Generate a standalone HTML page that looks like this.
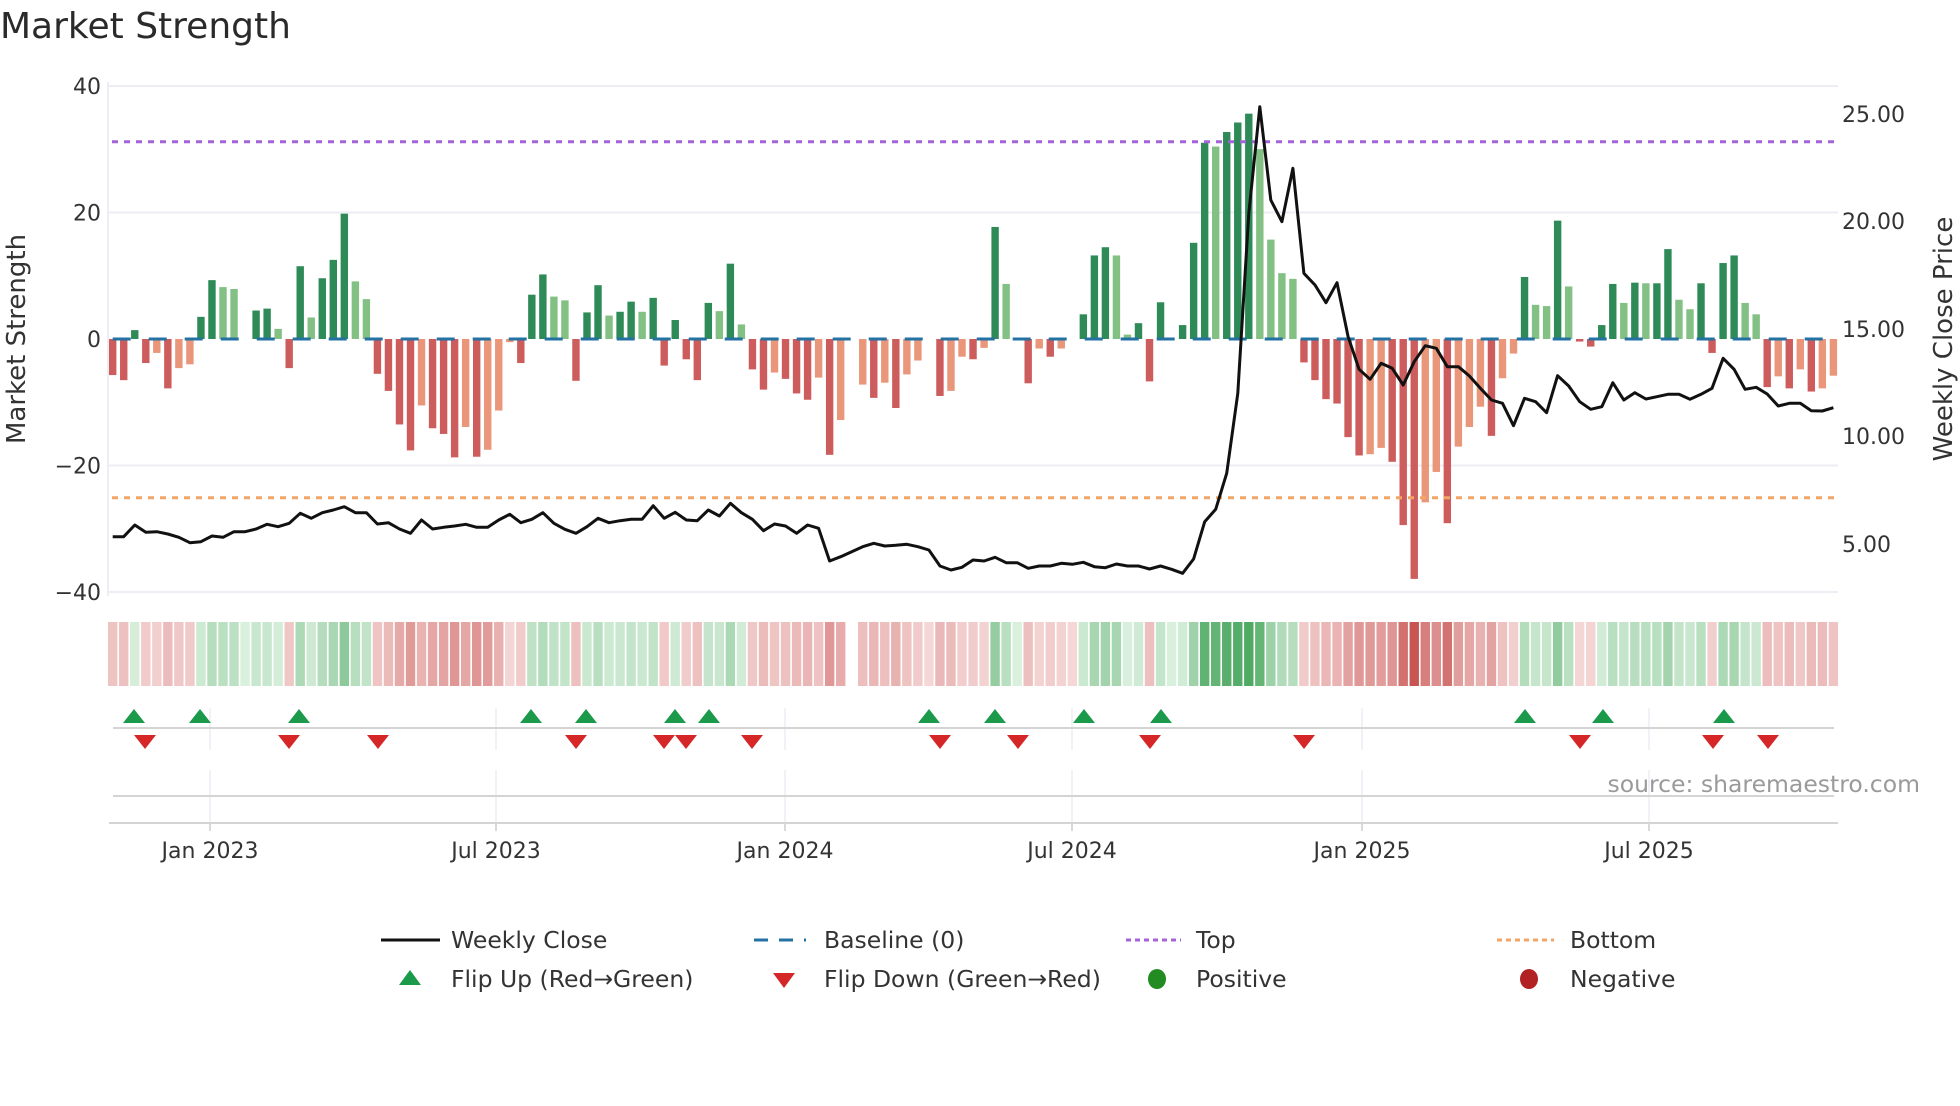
<!DOCTYPE html>
<html><head><meta charset="utf-8">
<style>
html,body{margin:0;padding:0;background:#fff;}
body{width:1960px;height:1102px;overflow:hidden;font-family:"DejaVu Sans","Liberation Sans",sans-serif;}
svg text{font-family:"DejaVu Sans","Liberation Sans",sans-serif;}
</style></head>
<body>
<svg id="c" width="1960" height="1102" xmlns="http://www.w3.org/2000/svg">
<text x="0" y="38" font-size="36" fill="#2a2a2a">Market Strength</text>
</svg>
<script>
const S=document.getElementById('c');
const NS='http://www.w3.org/2000/svg';
function el(t,a,txt){const e=document.createElementNS(NS,t);for(const k in a)e.setAttribute(k,a[k]);if(txt!==undefined)e.textContent=txt;S.appendChild(e);return e;}
const vals=[-5.7,-6.5,1.4,-3.8,-2.2,-7.8,-4.6,-4,3.5,9.3,8.2,7.9,0,4.5,4.8,1.6,-4.6,11.5,3.4,9.6,12.5,19.8,9.1,6.3,-5.5,-8.2,-13.5,-17.6,-10.5,-14.1,-15,-18.7,-13.9,-18.6,-17.5,-11.3,-0.5,-3.8,7,10.2,6.7,6.1,-6.6,4.2,8.5,3.7,4.3,5.9,4.3,6.5,-4.2,3,-3.2,-6.5,5.7,4.4,11.9,2.3,-4.8,-8,-5.3,-6.3,-8.6,-9.6,-6.1,-18.3,-12.8,0,-7.2,-9.3,-6.9,-10.9,-5.6,-3.4,0,-9,-8.2,-2.8,-3.2,-1.4,17.7,8.7,0,-7,-1.5,-2.8,-1.5,0,3.9,13.2,14.5,13.2,0.7,2.5,-6.7,5.8,0,2.2,15.2,31,30.4,32.7,34.2,35.6,30,15.7,10.4,9.5,-3.7,-6.5,-9.5,-10.2,-15.5,-18.4,-18.2,-17.2,-19.4,-29.4,-37.9,-25.8,-21,-29.1,-17,-13.9,-10.7,-15.3,-6.2,-2.3,9.8,5.4,5.2,18.7,8.3,-0.4,-1.2,2.2,8.7,5.7,8.9,8.8,8.8,14.2,6.2,4.7,8.8,-2.2,12,13.2,5.7,3.9,-7.6,-5.9,-7.8,-4.8,-8.3,-7.8,-5.8];
const types="RRDRSRSSDDLL-DDLRDLDDDLLRRRRSRRRSRSSSRDDLLRDDLDDLDRDRRDLDLRRSRRRSRS-SRSRSS-RSSRSDL-RSRS-DDDLLDRD-DDDLDDDLLLLRRRRRRSSRRRSSRSSSRSSDLLDLRRDDLDLDDLLDRDDLLRSRSRSS";
const price=[1370,1370,1335,1357,1355,1362,1372,1388,1385,1368,1372,1355,1355,1347,1333,1340,1330,1300,1315,1298,1290,1280,1298,1298,1332,1328,1347,1360,1320,1347,1342,1338,1333,1342,1342,1320,1303,1328,1318,1298,1330,
1348,1360,1340,1315,1328,1322,1318,1318,1277,1315,1297,1320,1322,1290,1308,1270,1298,1318,1352,1332,1338,1360,1335,1345,1443,1430,1415,1400,1390,1398,1396,1393,1400,1410,1458,1470,1462,1440,1443,1432,1448,1448,1465,
1458,1458,1450,1453,1447,1460,1463,1452,1458,1458,1467,1458,1468,1480,1437,1325,1288,1180,940,400,80,360,425,265,580,615,668,608,770,868,898,850,865,915,845,797,805,860,860,888,925,
960,970,1037,955,965,998,887,918,965,988,980,908,960,938,957,950,943,943,958,943,925,835,868,928,922,942,978,970,970,992,993,983];
const X0=112.7,DX=11.03,Z=339,K=6.33;
const col={D:'#2e8b57',L:'#82c083',R:'#cd5c5c',S:'#e9967a'};
[86,212.5,465.5,592].forEach(y=>el('line',{x1:109,x2:1838,y1:y,y2:y,stroke:'#eceef4','stroke-width':2}));
el('line',{x1:108,x2:108,y1:82,y2:596,stroke:'#eceef4','stroke-width':2});
[[40,86],[20,212.5],[0,339],['\u221220',465.5],['\u221240',592]].forEach(([t,y])=>el('text',{x:101,y:y+8,'font-size':22,'text-anchor':'end',fill:'#333'},String(t)));
[['25.00',114],['20.00',221],['15.00',329],['10.00',436],['5.00',544]].forEach(([t,y])=>el('text',{x:1842,y:y+8,'font-size':22,fill:'#333'},t));
el('text',{x:0,y:0,'font-size':26,fill:'#333','text-anchor':'middle',transform:'translate(25,339) rotate(-90)'},'Market Strength');
el('text',{x:0,y:0,'font-size':26,fill:'#333','text-anchor':'middle',transform:'translate(1952,339) rotate(-90)'},'Weekly Close Price');
vals.forEach((v,i)=>{const t=types[i];if(t==='-'||v===0)return;const x=X0+i*DX-3.7;const h=Math.abs(v)*K;el('rect',{x:x,y:v>0?Z-h:Z,width:7.4,height:h,fill:col[t]});});
el('line',{x1:112.7,x2:1838,y1:Z,y2:Z,stroke:'#2471a3','stroke-width':3,'stroke-dasharray':'18 18'});
el('line',{x1:112,x2:1838,y1:141.7,y2:141.7,stroke:'#a463d9','stroke-width':3,'stroke-dasharray':'6 6'});
el('line',{x1:112,x2:1838,y1:497.7,y2:497.7,stroke:'#f2a565','stroke-width':3,'stroke-dasharray':'6 6'});
el('polyline',{points:price.map((p,i)=>(X0+i*DX).toFixed(1)+','+(80+p/3).toFixed(1)).join(' '),fill:'none',stroke:'#111','stroke-width':3,'stroke-linejoin':'round'});
vals.forEach((v,i)=>{if(i===67)return;const a=Math.min(1,Math.abs(v)/38);let c;
 if(v>0||(v===0&&types[i-1]&&'DL'.includes(types[i-1]))){const r=Math.round(218-(218-70)*a),g=Math.round(240-(240-165)*a),b=Math.round(222-(222-92)*a);c=`rgb(${r},${g},${b})`;}
 else{const r=Math.round(245-(245-200)*a),g=Math.round(215-(215-85)*a),b=Math.round(215-(215-82)*a);c=`rgb(${r},${g},${b})`;}
 el('rect',{x:X0+i*DX-4.7,y:622,width:9.4,height:64,fill:c});});
const ticks=[['Jan 2023',210],['Jul 2023',496],['Jan 2024',785],['Jul 2024',1072],['Jan 2025',1362],['Jul 2025',1649]];
ticks.forEach(([t,x])=>{el('line',{x1:x,x2:x,y1:708,y2:750,stroke:'#eceef4','stroke-width':1.5});el('line',{x1:x,x2:x,y1:770,y2:823,stroke:'#eceef4','stroke-width':1.5});el('line',{x1:x,x2:x,y1:823,y2:831,stroke:'#ccc','stroke-width':1.5});el('text',{x:x,y:858,'font-size':22,'text-anchor':'middle',fill:'#333'},t);});
el('line',{x1:113,x2:1834,y1:728,y2:728,stroke:'#d4d4d4','stroke-width':2});
el('line',{x1:113,x2:1834,y1:796,y2:796,stroke:'#d4d4d4','stroke-width':2});
el('line',{x1:109,x2:1838,y1:823,y2:823,stroke:'#d4d4d4','stroke-width':2});
[134,200,299,531,586,675,709,929,995,1084,1161,1525,1603,1724].forEach(x=>el('path',{d:`M${x-11} 723 L${x+11} 723 L${x} 709 Z`,fill:'#1a9a4a'}));
[145,289,378,576,664,686,752,940,1018,1150,1304,1580,1713,1768].forEach(x=>el('path',{d:`M${x-11} 735 L${x+11} 735 L${x} 749 Z`,fill:'#d62728'}));
el('text',{x:1920,y:792,'font-size':23.5,'text-anchor':'end',fill:'#9a9a9a'},'source: sharemaestro.com');
function lt(x,y,t){el('text',{x:x,y:y+8,'font-size':23.5,fill:'#333'},t);}
el('line',{x1:381,x2:440,y1:940,y2:940,stroke:'#111','stroke-width':3});lt(451,940,'Weekly Close');
el('line',{x1:754,x2:806,y1:940,y2:940,stroke:'#2471a3','stroke-width':3,'stroke-dasharray':'14 11'});lt(824,940,'Baseline (0)');
el('line',{x1:1126,x2:1181,y1:940,y2:940,stroke:'#a463d9','stroke-width':3,'stroke-dasharray':'5 4'});lt(1196,940,'Top');
el('line',{x1:1497,x2:1554,y1:940,y2:940,stroke:'#f2a565','stroke-width':3,'stroke-dasharray':'5 4'});lt(1570,940,'Bottom');
el('path',{d:'M399 985 L421 985 L410 970 Z',fill:'#1a9a4a'});lt(451,979,'Flip Up (Red\u2192Green)');
el('path',{d:'M773 973 L795 973 L784 988 Z',fill:'#d62728'});lt(824,979,'Flip Down (Green\u2192Red)');
el('ellipse',{cx:1157,cy:979,rx:9,ry:10,fill:'#228b22'});lt(1196,979,'Positive');
el('ellipse',{cx:1529,cy:979,rx:9,ry:10,fill:'#b22222'});lt(1570,979,'Negative');
</script>
</body></html>
